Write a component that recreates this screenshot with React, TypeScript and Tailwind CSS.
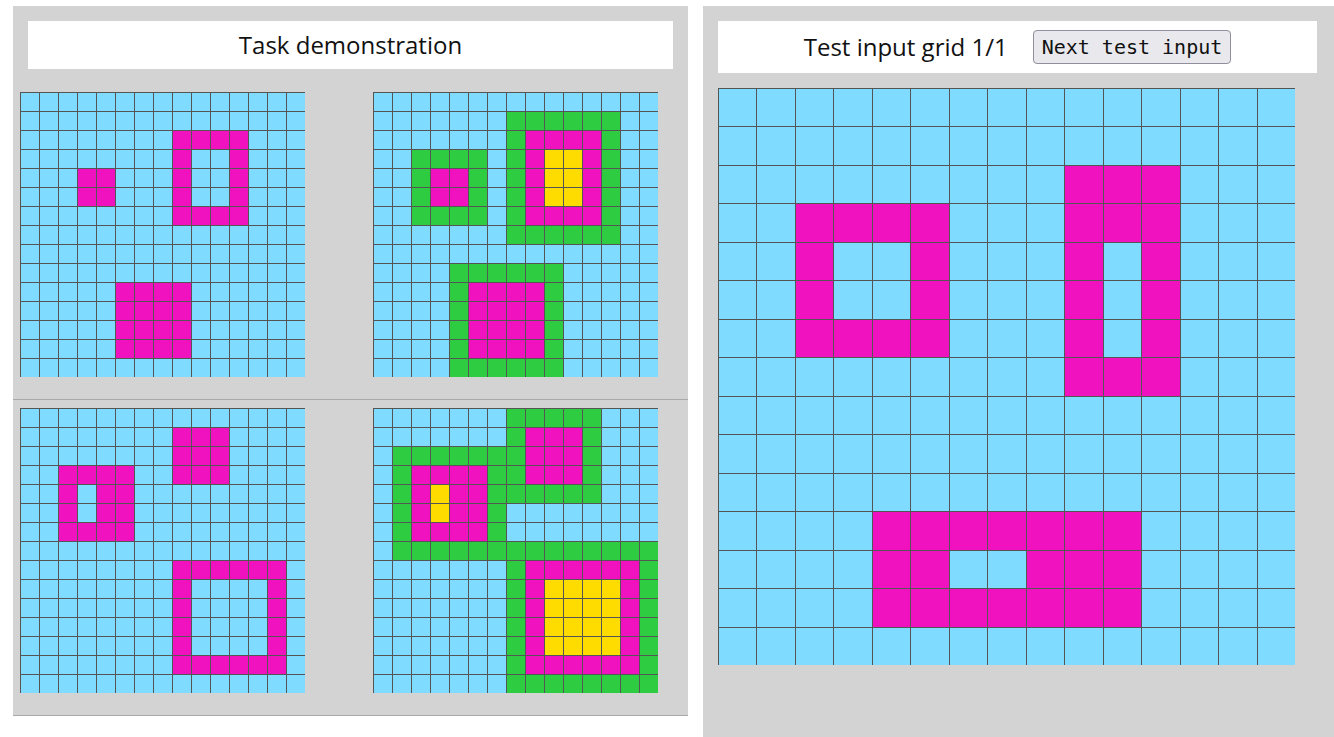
import React from "react";

const COLORS: Record<string, string> = {
  ".": "bg-[#7fdbff]",
  m: "bg-[#f012be]",
  g: "bg-[#2ecc40]",
  y: "bg-[#ffdc00]",
};

const D = "...............";

const in1 = [
  D,
  D,
  "........mmmm...",
  "........m..m...",
  "...mm...m..m...",
  "...mm...m..m...",
  "........mmmm...",
  D,
  D,
  D,
  ".....mmmm......",
  ".....mmmm......",
  ".....mmmm......",
  ".....mmmm......",
  D,
];

const out1 = [
  D,
  ".......gggggg..",
  ".......gmmmmg..",
  "..gggg.gmyymg..",
  "..gmmg.gmyymg..",
  "..gmmg.gmyymg..",
  "..gggg.gmmmmg..",
  ".......gggggg..",
  D,
  "....gggggg.....",
  "....gmmmmg.....",
  "....gmmmmg.....",
  "....gmmmmg.....",
  "....gmmmmg.....",
  "....gggggg.....",
];

const in2 = [
  D,
  "........mmm....",
  "........mmm....",
  "..mmmm..mmm....",
  "..m.mm.........",
  "..m.mm.........",
  "..mmmm.........",
  D,
  "........mmmmmm.",
  "........m....m.",
  "........m....m.",
  "........m....m.",
  "........m....m.",
  "........mmmmmm.",
  D,
];

const out2 = [
  ".......ggggg...",
  ".......gmmmg...",
  ".gggggggmmmg...",
  ".gmmmmggmmmg...",
  ".gmymmgggggg...",
  ".gmymmg........",
  ".gmmmmg........",
  ".gggggggggggggg",
  ".......gmmmmmmg",
  ".......gmyyyymg",
  ".......gmyyyymg",
  ".......gmyyyymg",
  ".......gmyyyymg",
  ".......gmmmmmmg",
  ".......gggggggg",
];

const test = [
  D,
  D,
  ".........mmm...",
  "..mmmm...mmm...",
  "..m..m...m.m...",
  "..m..m...m.m...",
  "..mmmm...m.m...",
  ".........mmm...",
  D,
  D,
  D,
  "....mmmmmmm....",
  "....mm..mmm....",
  "....mmmmmmm....",
  D,
];

function Grid({ rows, size }: { rows: string[]; size: "s" | "l" }) {
  return (
    <div
      className={
        size === "s"
          ? "grid grid-cols-[repeat(15,19px)] grid-rows-[repeat(15,19px)] w-[285px] h-[285px] shrink-0"
          : "grid grid-cols-[repeat(15,1fr)] grid-rows-[repeat(15,1fr)] w-[577px] h-[577px] shrink-0"
      }
    >
      {rows.flatMap((r, i) =>
        r.split("").map((c, j) => (
          <div
            key={i + "-" + j}
            className={"border-t border-l border-[#555555] " + COLORS[c]}
          />
        ))
      )}
    </div>
  );
}

export default function App() {
  return (
    <div
      className="flex h-[737px] w-[1334px] overflow-hidden bg-white text-[#111111]"
      style={{ fontFamily: '"Open Sans", "Noto Sans", sans-serif' }}
    >
      <div className="ml-[13px] mt-[6px] w-[675px] self-start bg-[#d3d3d3] shrink-0">
        <div className="mx-[15px] mt-[15px] h-[48px] bg-white flex items-center justify-center text-[24px] leading-none">
          Task demonstration
        </div>
        <div className="mt-[15px]">
          <div className="flex pt-[8px] pb-[22px] pl-[7px] border-b border-[#a9a9a9]">
            <Grid rows={in1} size="s" />
            <div className="ml-[68px]">
              <Grid rows={out1} size="s" />
            </div>
          </div>
          <div className="flex pt-[8px] pb-[22px] pl-[7px] border-b border-[#a9a9a9]">
            <Grid rows={in2} size="s" />
            <div className="ml-[68px]">
              <Grid rows={out2} size="s" />
            </div>
          </div>
        </div>
      </div>
      <div className="ml-[15px] mt-[6px] w-[631px] h-[731px] bg-[#d3d3d3] shrink-0">
        <div className="mx-[15px] mt-[15px] w-[599px] h-[52px] bg-white flex items-center justify-center gap-[25px]">
          <span className="text-[24px] leading-none">Test input grid 1/1</span>
          <button
            className="h-[34px] px-[8px] rounded-[4px] border border-[#8f8f9d] bg-[#e9e9ed] text-[20px] leading-none text-[#111111]"
            style={{ fontFamily: '"DejaVu Sans Mono", "Liberation Mono", monospace' }}
          >
            Next test input
          </button>
        </div>
        <div className="ml-[15px] mt-[15px]">
          <Grid rows={test} size="l" />
        </div>
      </div>
    </div>
  );
}
